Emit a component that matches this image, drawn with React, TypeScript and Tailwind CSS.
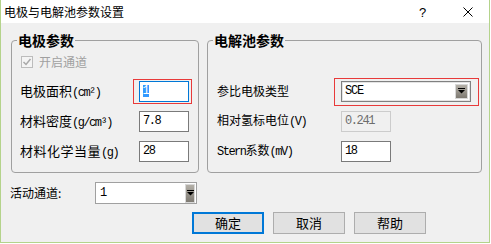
import React from "react";

const CJK = "font-['Noto_Sans_CJK_SC','Noto_Sans',sans-serif]";
const LAT = "font-['Liberation_Mono',monospace]";

function Arrow({ w, h }: { w: number; h: number }) {
  return (
    <div
      className="flex items-center justify-center border border-[#d8d8d8] bg-gradient-to-b from-[#b4b0a8] to-[#7e7a72]"
      style={{ width: w, height: h }}
    >
      <svg width="7" height="6" viewBox="0 0 7 6">
        <rect x="0" y="0" width="7" height="1" fill="#000" />
        <polygon points="0,2 7,2 3.5,5.5" fill="#000" />
      </svg>
    </div>
  );
}

function TextBox({ value, disabled }: { value: string; disabled?: boolean }) {
  return (
    <div
      className={`w-[50px] h-[21px] flex items-center pl-[3px] border ${
        disabled ? "border-[#cccccc] bg-[#f0f0f0] text-[#6d6d6d]" : "border-[#7a7a7a] bg-white text-black"
      }`}
    >
      <span className={`${LAT} text-[12px] tracking-[-1.4px] leading-none`}>{value}</span>
    </div>
  );
}

function Btn({ label, primary }: { label: string; primary?: boolean }) {
  return (
    <div
      className={`w-[72px] h-[22px] flex items-center justify-center bg-[#e1e1e1] text-[13px] ${CJK} ${
        primary ? "border-2 border-[#0078d7]" : "border border-[#adadad]"
      }`}
    >
      {label}
    </div>
  );
}

export default function App() {
  return (
    <div className={`w-[490px] h-[243px] flex flex-col bg-[#f0f0f0] border-l border-r border-b border-[#b4d38b] text-black ${CJK}`}>
      {/* title bar */}
      <div className="h-[23px] bg-white flex items-center relative shrink-0">
        <span className="pl-[3px] text-[12px] leading-none">电极与电解池参数设置</span>
        <span className="absolute left-[418px] top-[3px] text-[13px] font-['Liberation_Sans',sans-serif]">?</span>
        <svg className="absolute left-[462px] top-[7px]" width="10" height="10" viewBox="0 0 10 10">
          <line x1="0.5" y1="0.5" x2="9.5" y2="9.5" stroke="#000" strokeWidth="1" />
          <line x1="9.5" y1="0.5" x2="0.5" y2="9.5" stroke="#000" strokeWidth="1" />
        </svg>
      </div>

      {/* groups */}
      <div className="flex pl-[10px] mt-[9px] gap-[8px]">
        <fieldset className="w-[188px] h-[141px] border border-[#a0a0a0] rounded-[4px] m-0 p-0 min-w-0">
          <legend className="ml-[5px] px-[1px] text-[14px] font-bold leading-[16px]">电极参数</legend>
          <div className="flex flex-col">
            <div className="h-[28px] flex items-center pl-[9px]">
              <div className="w-[12px] h-[12px] border border-[#bcbcbc] bg-[#f4f4f4] flex items-center justify-center">
                <svg width="10" height="10" viewBox="0 0 10 10">
                  <polyline points="1.5,5 4,7.5 8.5,2" fill="none" stroke="#a8a8a8" strokeWidth="1.5" />
                </svg>
              </div>
              <span className="ml-[6px] text-[12px] text-[#a0a0a0]">开启通道</span>
            </div>
            <div className="h-[30px] flex items-center">
              <div className="w-[127px] pl-[8px] text-[13px] whitespace-nowrap">
                电极面积<span className={`${LAT} text-[12px] tracking-[-1.5px]`}>(cm²)</span>
              </div>
              <div className="relative">
                <div className="absolute left-[-6px] top-[-2px] w-[59px] h-[25px] border border-[#e83a3a]" />
                <div className="w-[50px] h-[21px] flex items-center pl-[3px] border border-[#0078d7] bg-white">
                  <span className={`${LAT} inline-flex items-center justify-center w-[6px] h-[12px] text-[12px] leading-none bg-[#3399ff] text-white`}>1</span>
                </div>
              </div>
            </div>
            <div className="h-[30px] flex items-center">
              <div className="w-[127px] pl-[8px] text-[13px] whitespace-nowrap">
                材料密度<span className={`${LAT} text-[12px] tracking-[-1.5px]`}>(g/cm³)</span>
              </div>
              <TextBox value="7.8" />
            </div>
            <div className="h-[30px] flex items-center">
              <div className="w-[127px] pl-[8px] text-[13px] whitespace-nowrap tracking-[0.5px]">
                材料化学当量<span className={`${LAT} text-[12px] tracking-[-1.5px]`}>(g)</span>
              </div>
              <TextBox value="28" />
            </div>
          </div>
        </fieldset>

        <fieldset className="w-[275px] h-[141px] border border-[#a0a0a0] rounded-[4px] m-0 p-0 min-w-0">
          <legend className="ml-[5px] px-[1px] text-[14px] font-bold leading-[16px]">电解池参数</legend>
          <div className="flex flex-col">
            <div className="h-[28px]" />
            <div className="h-[30px] flex items-center">
              <div className="w-[133px] pl-[9px] text-[12px] whitespace-nowrap">参比电极类型</div>
              <div className="relative">
                <div className="absolute left-[-7px] top-[-3px] w-[145px] h-[28px] border border-[#e83a3a]" />
                <div className="w-[130px] h-[21px] flex items-center justify-between pl-[3px] pr-[2px] border border-[#808080] bg-white shadow-[inset_0_0_0_1px_#e4e4e4]">
                  <span className={`${LAT} text-[12px] tracking-[-1.2px] leading-none`}>SCE</span>
                  <Arrow w={13} h={15} />
                </div>
              </div>
            </div>
            <div className="h-[30px] flex items-center">
              <div className="w-[133px] pl-[9px] text-[12px] whitespace-nowrap">
                相对氢标电位<span className={`${LAT} text-[12px] tracking-[-1.5px]`}>(V)</span>
              </div>
              <TextBox value="0.241" disabled />
            </div>
            <div className="h-[30px] flex items-center">
              <div className="w-[133px] pl-[9px] text-[12px] whitespace-nowrap">
                <span className={`${LAT} text-[12px] tracking-[-1.5px]`}>Stern</span>系数<span className={`${LAT} text-[12px] tracking-[-1.5px]`}>(mV)</span>
              </div>
              <TextBox value="18" />
            </div>
          </div>
        </fieldset>
      </div>

      {/* active channel */}
      <div className="flex items-center mt-[9px] h-[22px]">
        <div className="w-[94px] pl-[9px] text-[12px] whitespace-nowrap">活动通道:</div>
        <div className="w-[102px] h-[22px] flex items-center justify-between pl-[4px] pr-[1px] border border-[#a0a0a0] bg-white">
          <span className={`${LAT} text-[12px] leading-none`}>1</span>
          <Arrow w={10} h={19} />
        </div>
      </div>

      {/* buttons */}
      <div className="flex mt-[8px] pl-[191px] gap-[9px]">
        <Btn label="确定" primary />
        <Btn label="取消" />
        <Btn label="帮助" />
      </div>
    </div>
  );
}
